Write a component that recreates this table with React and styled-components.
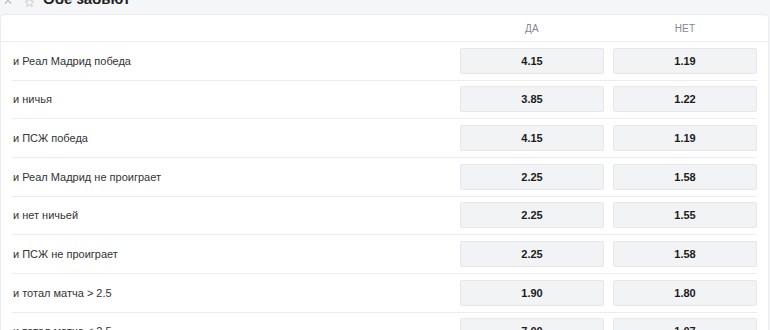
import React from 'react';
import styled, { createGlobalStyle } from 'styled-components';

const GlobalStyle = createGlobalStyle`
  html, body {
    margin: 0;
    padding: 0;
    background: #f5f6f8;
    font-family: 'Liberation Sans', Arial, sans-serif;
    overflow: hidden;
  }
`;

const Page = styled.div`
  width: 770px;
  height: 330px;
  overflow: hidden;
`;

const TitleBar = styled.div`
  display: flex;
  align-items: center;
  height: 24px;
  margin-top: -10px;
  padding-left: 2px;
`;

const TitleText = styled.span`
  font-size: 15px;
  font-weight: 700;
  color: #222;
  margin-left: 8px;
  position: relative;
  top: -4px;
`;

const IconSlot = styled.span`
  display: flex;
  margin-left: ${(p) => p.gap}px;
`;

const Card = styled.div`
  width: 767px;
  background: #fff;
  border: 1px solid #ebecef;
  border-radius: 4px;
`;

const HeadRow = styled.div`
  display: grid;
  grid-template-columns: 1fr 144px 144px;
  column-gap: 9px;
  align-items: center;
  height: 26px;
  padding: 0 11px;
  border-bottom: 1px solid #ebecef;
`;

const ColLabel = styled.span`
  grid-column: ${(p) => p.col};
  text-align: center;
  font-size: 10px;
  color: #85888e;
  letter-spacing: 0.2px;
`;

const Row = styled.div`
  display: grid;
  grid-template-columns: 1fr 144px 144px;
  column-gap: 9px;
  align-items: center;
  box-sizing: border-box;
  height: 38.67px;
  margin: 0 11px;
  border-bottom: 1px solid #ececee;
`;

const Label = styled.span`
  font-size: 11px;
  color: #333;
  padding-left: 1px;
`;

const Odd = styled.button`
  height: 26px;
  padding: 0;
  font-family: inherit;
  font-size: 11px;
  font-weight: 700;
  color: #1c1c1c;
  background: #f2f3f5;
  border: 1px solid #e6e7ea;
  border-radius: 2px;
`;

const Chevron = () => (
  <svg width="10" height="10" viewBox="0 0 10 10">
    <path d="M2 6.5 L5 3.5 L8 6.5" fill="none" stroke="#b9bcc2" strokeWidth="1.2" />
  </svg>
);

const Star = () => (
  <svg width="11" height="11" viewBox="0 0 24 24">
    <path
      d="M12 2.5l2.9 6.1 6.6.8-4.9 4.6 1.3 6.6L12 17.3l-5.9 3.3 1.3-6.6-4.9-4.6 6.6-.8z"
      fill="none"
      stroke="#c3c6cc"
      strokeWidth="1.8"
    />
  </svg>
);

const rows = [
  ['и Реал Мадрид победа', '4.15', '1.19'],
  ['и ничья', '3.85', '1.22'],
  ['и ПСЖ победа', '4.15', '1.19'],
  ['и Реал Мадрид не проиграет', '2.25', '1.58'],
  ['и нет ничьей', '2.25', '1.55'],
  ['и ПСЖ не проиграет', '2.25', '1.58'],
  ['и тотал матча > 2.5', '1.90', '1.80'],
  ['и тотал матча < 2.5', '7.00', '1.07'],
];

export default function App() {
  return (
    <Page>
      <GlobalStyle />
      <TitleBar>
        <IconSlot gap={1}>
          <Chevron />
        </IconSlot>
        <IconSlot gap={11}>
          <Star />
        </IconSlot>
        <TitleText>Обе забьют</TitleText>
      </TitleBar>
      <Card>
        <HeadRow>
          <ColLabel col={2}>ДА</ColLabel>
          <ColLabel col={3}>НЕТ</ColLabel>
        </HeadRow>
        {rows.map(([name, yes, no]) => (
          <Row key={name}>
            <Label>{name}</Label>
            <Odd>{yes}</Odd>
            <Odd>{no}</Odd>
          </Row>
        ))}
      </Card>
    </Page>
  );
}
